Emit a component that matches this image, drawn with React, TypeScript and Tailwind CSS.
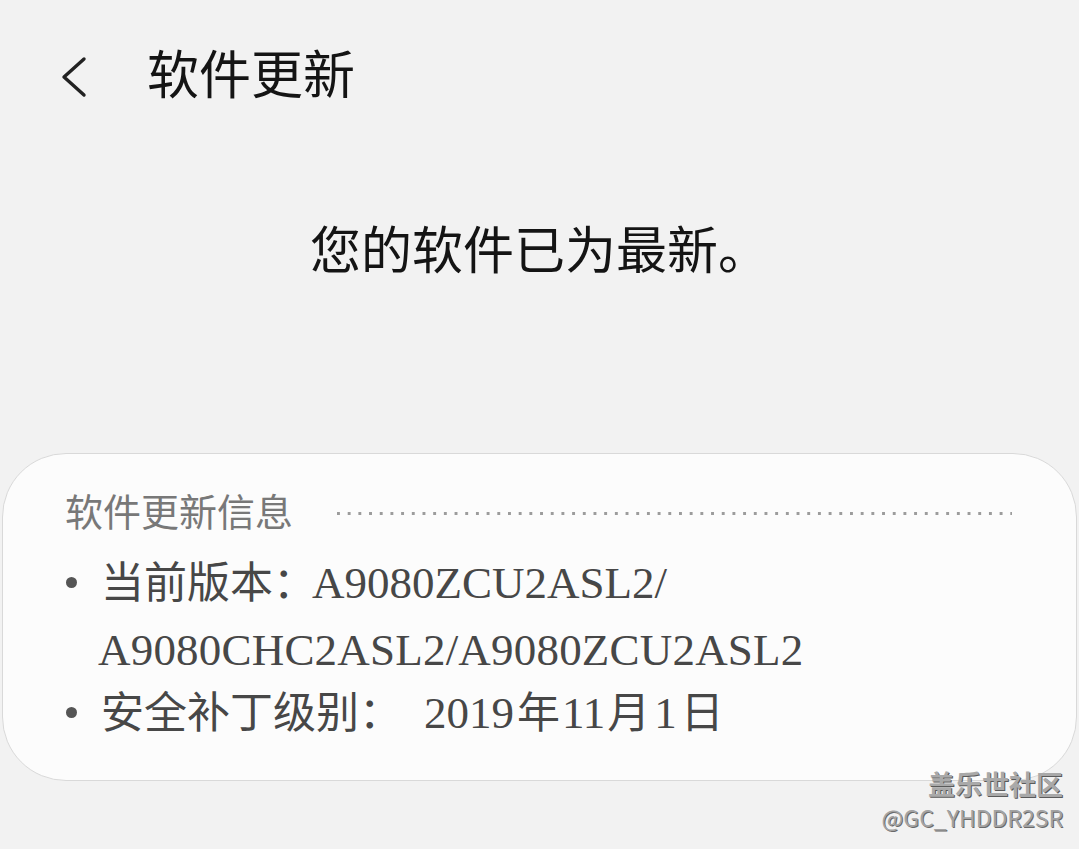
const serif = "font-['Liberation_Serif','Noto_Sans_CJK_SC',serif]";

const BackIcon = () => (
    <svg width="30" height="42" viewBox="0 0 30 42" fill="none">
        <path d="M26 3 L6 21 L26 39" stroke="#222" strokeWidth="3.4" strokeLinecap="round" strokeLinejoin="round" />
    </svg>
);

const Bullet = ({ children }: { children: React.ReactNode }) => (
    <li className="flex">
        <span className="w-[36px] shrink-0 pl-[1px] flex items-start pt-[27px]">
            <span className="block w-[11px] h-[11px] rounded-full bg-[#555]" />
        </span>
        <span className="flex-1">{children}</span>
    </li>
);

export default function App() {
    return (
        <div className={`relative w-[1079px] h-[849px] overflow-hidden bg-[#f2f2f2] ${serif}`}>
            <header className="flex items-center pt-[47px] pl-[58px] h-[107px]">
                <BackIcon />
                <h1 className="ml-[59px] text-[52px] leading-[60px] text-[#141414]">软件更新</h1>
            </header>

            <p className="mt-[115px] text-center text-[51px] leading-[60px] text-[#141414]">您的软件已为最新。</p>

            <section className="mt-[171px] mx-[2px] h-[328px] rounded-[64px] border border-[#d9d9d9] bg-[#fcfcfc] pt-[37px] pl-[62px] pr-[64px]">
                <div className="flex items-center">
                    <h2 className="text-[38px] leading-[44px] text-[#787878]">软件更新信息</h2>
                    <div className="ml-[44px] flex-1 h-[3px] bg-[linear-gradient(to_right,#9c9c9c_3px,transparent_3px)] bg-[length:10.7px_3px] bg-repeat-x" />
                </div>

                <ul className="mt-[15px] text-[43px] leading-[66px] text-[#474747]">
                    <Bullet>
                        当前版本：<span className="text-[45px] -ml-[4px]">A9080ZCU2ASL2/</span>
                        <br />
                        <span className="text-[45px] -ml-[3px] tracking-[0.2px]">A9080CHC2ASL2/A9080ZCU2ASL2</span>
                    </Bullet>
                    <div className="-mt-[4px]">
                        <Bullet>
                            安全补丁级别：
                            <span className="text-[45px] ml-[22px] mr-[3px]">2019</span>年
                            <span className="text-[45px] mx-[2px]">11</span>月
                            <span className="text-[45px] mx-[4px]">1</span>日
                        </Bullet>
                    </div>
                </ul>
            </section>

            <div className="absolute right-[16px] bottom-[16px] flex flex-col items-end font-['Noto_Sans_CJK_SC',sans-serif]">
                <span className="text-[27px] leading-[34px] font-bold text-[#a9a9a9] [text-shadow:1px_1px_0_#5a5a5a]">盖乐世社区</span>
                <span className="text-[23px] leading-[32px] text-[#a3a3a3] [text-shadow:1px_1px_0_#6a6a6a]">@GC_YHDDR2SR</span>
            </div>
        </div>
    );
}
